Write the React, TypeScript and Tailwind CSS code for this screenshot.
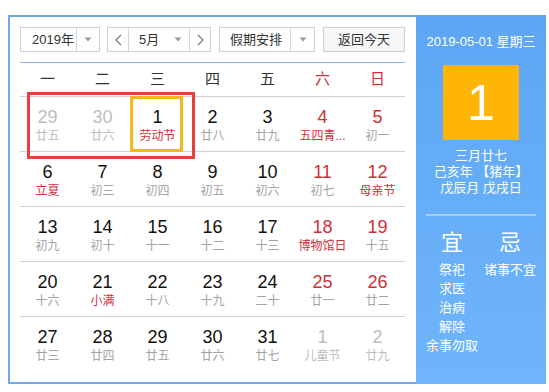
import React from 'react';

type Day = {
  day: number;
  sub: string;
  other?: boolean;
  weekend?: boolean;
  festival?: boolean;
};

const weekNames = ['一', '二', '三', '四', '五', '六', '日'];

const rows: Day[][] = [
  [
    { day: 29, sub: '廿五', other: true },
    { day: 30, sub: '廿六', other: true },
    { day: 1, sub: '劳动节', festival: true },
    { day: 2, sub: '廿八' },
    { day: 3, sub: '廿九' },
    { day: 4, sub: '五四青...', weekend: true, festival: true },
    { day: 5, sub: '初一', weekend: true },
  ],
  [
    { day: 6, sub: '立夏', festival: true },
    { day: 7, sub: '初三' },
    { day: 8, sub: '初四' },
    { day: 9, sub: '初五' },
    { day: 10, sub: '初六' },
    { day: 11, sub: '初七', weekend: true },
    { day: 12, sub: '母亲节', weekend: true, festival: true },
  ],
  [
    { day: 13, sub: '初九' },
    { day: 14, sub: '初十' },
    { day: 15, sub: '十一' },
    { day: 16, sub: '十二' },
    { day: 17, sub: '十三' },
    { day: 18, sub: '博物馆日', weekend: true, festival: true },
    { day: 19, sub: '十五', weekend: true },
  ],
  [
    { day: 20, sub: '十六' },
    { day: 21, sub: '小满', festival: true },
    { day: 22, sub: '十八' },
    { day: 23, sub: '十九' },
    { day: 24, sub: '二十' },
    { day: 25, sub: '廿一', weekend: true },
    { day: 26, sub: '廿二', weekend: true },
  ],
  [
    { day: 27, sub: '廿三' },
    { day: 28, sub: '廿四' },
    { day: 29, sub: '廿五' },
    { day: 30, sub: '廿六' },
    { day: 31, sub: '廿七' },
    { day: 1, sub: '儿童节', other: true },
    { day: 2, sub: '廿九', other: true },
  ],
];

const Caret = () => (
  <svg width="8" height="5" viewBox="0 0 8 5">
    <path d="M0.5 0.5 L7.5 0.5 L4 4.5 Z" fill="#9a9a9a" />
  </svg>
);

const Chevron = ({ dir }: { dir: 'l' | 'r' }) => (
  <svg width="7" height="12" viewBox="0 0 7 12">
    <path
      d={dir === 'l' ? 'M6 1 L1 6 L6 11' : 'M1 1 L6 6 L1 11'}
      fill="none"
      stroke="#777"
      strokeWidth="1.2"
    />
  </svg>
);

const DayCell = ({ d, today }: { d: Day; today?: boolean }) => {
  const numColor = d.other ? 'text-[#bdbdbd]' : d.weekend ? 'text-[#cf3038]' : 'text-[#111]';
  const subColor = d.other ? 'text-[#bdbdbd]' : d.festival ? 'text-[#cf3038]' : 'text-[#a3a3a3]';
  return (
    <div className="relative flex h-[54px] flex-col items-center pt-[9px]">
      <span className={`text-[18px] leading-[22px] ${numColor}`}>{d.day}</span>
      <span className={`text-[12px] leading-[16px] ${subColor}`}>{d.sub}</span>
      {today && (
        <div className="absolute -top-[1px] left-0 h-[56px] w-[53px] border-[3px] border-[#f5b71b]" />
      )}
    </div>
  );
};

export default function App() {
  return (
    <div
      className="h-[392px] w-[549px] bg-white pl-[8px] pt-[15px]"
      style={{ fontFamily: '"Liberation Sans", "Noto Sans CJK SC", sans-serif' }}
    >
      <div className="flex h-[369px] w-[538px]">
        {/* calendar side */}
        <div className="w-[408px] border-2 border-r-0 border-[#6fa8ec] bg-white px-[10px] pt-[10px]">
          <div className="flex h-[25px] gap-[7px] text-[13px] text-[#333]">
            <div className="flex w-[80px] border border-[#d0d0d0]">
              <div className="flex w-[55px] items-center pl-[11px]">2019年</div>
              <div className="flex flex-1 items-center justify-center border-l border-[#d8d8d8]">
                <Caret />
              </div>
            </div>
            <div className="flex w-[104px] border border-[#d0d0d0]">
              <div className="flex w-[21px] items-center justify-center border-r border-[#d8d8d8]">
                <Chevron dir="l" />
              </div>
              <div className="flex flex-1 items-center justify-between pl-[10px] pr-[7px]">
                <span>5月</span>
                <Caret />
              </div>
              <div className="flex w-[21px] items-center justify-center border-l border-[#d8d8d8]">
                <Chevron dir="r" />
              </div>
            </div>
            <div className="ml-[1px] flex w-[96px] border border-[#d0d0d0]">
              <div className="flex w-[70px] items-center pl-[10px]">假期安排</div>
              <div className="flex flex-1 items-center justify-center border-l border-[#d8d8d8]">
                <Caret />
              </div>
            </div>
            <div className="ml-[1px] flex w-[82px] items-center justify-center border border-[#d0d0d0] bg-[#f6f6f6]">
              返回今天
            </div>
          </div>

          <div className="mt-[10px] h-[1px] w-[385px] bg-[#86b6ea]" />

          <div className="grid h-[33px] w-[385px] grid-cols-7 items-center text-[15px]">
            {weekNames.map((w, i) => (
              <div key={w} className={`text-center ${i > 4 ? 'text-[#cf3038]' : 'text-[#333]'}`}>
                {w}
              </div>
            ))}
          </div>

          <div className="relative w-[385px]">
            {rows.map((row, ri) => (
              <div key={ri} className="grid grid-cols-7 border-t border-[#d0d0d0]">
                {row.map((d, ci) => (
                  <DayCell key={ci} d={d} today={ri === 0 && ci === 2} />
                ))}
              </div>
            ))}
            <div className="absolute -top-[4px] left-[7px] h-[67px] w-[168px] border-[3px] border-[#e8403b]" />
          </div>
        </div>

        {/* info side */}
        <div className="flex w-[130px] flex-col items-center bg-gradient-to-b from-[#5da6f4] to-[#6fb5fb] text-white">
          <div className="mt-[17px] text-[13px] leading-[20px]">2019-05-01 星期三</div>
          <div className="mt-[13px] flex h-[75px] w-[76px] items-center justify-center rounded-[2px] bg-[#ffb507] text-[50px] leading-none">
            1
          </div>
          <div className="mt-[8px] flex flex-col items-center text-[13px] leading-[16px]">
            <span>三月廿七</span>
            <span>己亥年 【猪年】</span>
            <span>戊辰月 戊戌日</span>
          </div>
          <div className="mt-[18px] h-[2px] w-[110px] bg-white/40" />
          <div className="mt-[13px] flex">
            <div className="flex w-[58px] flex-col items-center">
              <span className="text-[22px] leading-[28px]">宜</span>
              <div className="mt-[3px] flex flex-col items-center text-[13px] leading-[19px]">
                <span>祭祀</span>
                <span>求医</span>
                <span>治病</span>
                <span>解除</span>
                <span>余事勿取</span>
              </div>
            </div>
            <div className="flex w-[58px] flex-col items-center">
              <span className="text-[22px] leading-[28px]">忌</span>
              <div className="mt-[3px] flex flex-col items-center text-[13px] leading-[19px]">
                <span>诸事不宜</span>
              </div>
            </div>
          </div>
        </div>
      </div>
    </div>
  );
}
